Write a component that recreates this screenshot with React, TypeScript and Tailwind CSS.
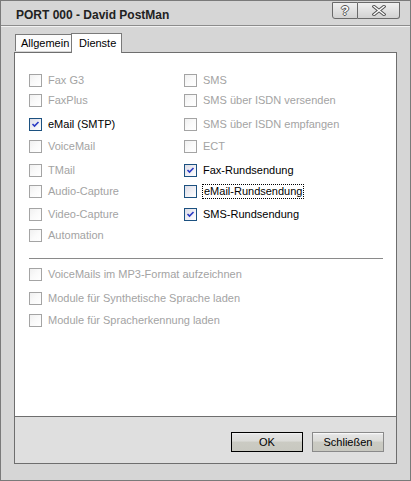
import React from 'react';

interface CheckItem {
  label: string;
  checked?: boolean;
  enabled?: boolean;
  focused?: boolean;
}

const leftItems: CheckItem[] = [
  { label: 'Fax G3' },
  { label: 'FaxPlus' },
  { label: 'eMail (SMTP)', checked: true, enabled: true },
  { label: 'VoiceMail' },
  { label: 'TMail' },
  { label: 'Audio-Capture' },
  { label: 'Video-Capture' },
  { label: 'Automation' },
];

const rightItems: CheckItem[] = [
  { label: 'SMS' },
  { label: 'SMS über ISDN versenden' },
  { label: 'SMS über ISDN empfangen' },
  { label: 'ECT' },
  { label: 'Fax-Rundsendung', checked: true, enabled: true },
  { label: 'eMail-Rundsendung', enabled: true, focused: true },
  { label: 'SMS-Rundsendung', checked: true, enabled: true },
];

const bottomItems: CheckItem[] = [
  { label: 'VoiceMails im MP3-Format aufzeichnen' },
  { label: 'Module für Synthetische Sprache laden' },
  { label: 'Module für Spracherkennung laden' },
];

const Box: React.FC<{ checked?: boolean; enabled?: boolean }> = ({ checked, enabled }) => (
  <span
    className={`relative w-[13px] h-[13px] shrink-0 border ${
      enabled
        ? 'border-[#1c5180] bg-[linear-gradient(135deg,#dcdce7_0%,#f2f2f6_60%,#ffffff_100%)]'
        : 'border-[#a4a4a4] bg-[linear-gradient(135deg,#f0f0f0_0%,#fafafa_50%,#ffffff_100%)]'
    }`}
  >
    {checked && (
      <svg className="absolute left-0 top-0" width="11" height="11" viewBox="0 0 11 11">
        <path d="M2.5 5 L4.5 7 L8.5 3" fill="none" stroke="#2a3ac4" strokeWidth="1.6" />
      </svg>
    )}
  </span>
);

const Check: React.FC<{ item: CheckItem }> = ({ item }) => (
  <div className="flex items-start h-[13px]">
    <Box checked={item.checked} enabled={item.enabled} />
    <span
      className={`ml-[6px] leading-[13px] whitespace-nowrap ${
        item.enabled ? 'text-black' : 'text-[#a3a3a3]'
      } ${item.focused ? 'outline outline-1 outline-dotted outline-black px-[1px] ml-[5px]' : ''}`}
    >
      {item.label}
    </span>
  </div>
);

const rowClass = [
  'h-[20px]',
  'h-[24px]',
  'h-[22px]',
  'h-[24px]',
  'h-[21px]',
  'h-[23px]',
  'h-[21px]',
  'h-[13px]',
];

export default function App() {
  return (
    <div className="w-[411px] h-[481px] bg-[#d6d6d6] border border-[#7a7a7a] flex flex-col font-['Liberation_Sans',Arial,sans-serif] text-[11px] select-none overflow-hidden">
      {/* Title bar */}
      <div className="h-[25px] shrink-0 flex items-start justify-between border-b border-[#8c8c8c] pl-[15px] pr-[10px]">
        <span className="mt-[6px] text-[12px] font-bold text-[#222] leading-[16px]">PORT 000 - David PostMan</span>
        <div className="flex mt-[1px] h-[17px]">
          <div className="w-[26px] h-full border border-[#6a6a6a] rounded-bl-[3px] bg-[linear-gradient(#f0f0f0,#d2d2d2)] flex items-center justify-center">
            <span className="text-[13px] font-bold leading-none text-white [text-shadow:1px_0_#555,-1px_0_#555,0_1px_#555,0_-1px_#555]">?</span>
          </div>
          <div className="w-[42px] h-full border border-l-0 border-[#6a6a6a] rounded-br-[3px] bg-[linear-gradient(#f0f0f0,#d2d2d2)] flex items-center justify-center">
            <svg width="14" height="11" viewBox="0 0 14 11">
              <path d="M2 1.5 L12 9.5 M12 1.5 L2 9.5" stroke="#555" strokeWidth="3.4" strokeLinecap="square" />
              <path d="M2 1.5 L12 9.5 M12 1.5 L2 9.5" stroke="#fff" strokeWidth="1.4" strokeLinecap="square" />
            </svg>
          </div>
        </div>
      </div>
      <div className="h-px bg-[#f2f2f2] shrink-0" />

      {/* Body */}
      <div className="flex-1 flex flex-col pl-[13px] pr-[13px] pb-[16px]">
        {/* Tabs */}
        <div className="flex items-end h-[25px] pl-[1px] shrink-0">
          <div className="h-[17px] w-[56px] border-l border-t border-[#7a7a7a] bg-[#fbfbfb] flex items-center pl-[5px] mb-px text-black">
            Allgemein
          </div>
          <div className="h-[20px] w-[51px] border border-b-0 border-[#7a7a7a] bg-white flex items-center pl-[7px] -mb-px relative z-10 text-black">
            Dienste
          </div>
        </div>

        {/* Panel */}
        <div className="flex-1 border border-[#6e6e6e] flex flex-col">
          <div className="h-[364px] bg-white border-b border-[#6e6e6e] flex flex-col pl-[14px] pr-[13px]">
            <div className="grid grid-cols-[155px_1fr] pt-[21px]">
              <div className="flex flex-col">
                {leftItems.map((it, i) => (
                  <div key={it.label} className={rowClass[i]}>
                    <Check item={it} />
                  </div>
                ))}
              </div>
              <div className="flex flex-col">
                {rightItems.map((it, i) => (
                  <div key={it.label} className={rowClass[i]}>
                    <Check item={it} />
                  </div>
                ))}
              </div>
            </div>
            <div className="mt-[16px] h-px bg-[#8a8a8a]" />
            <div className="flex flex-col pt-[9px]">
              <div className="h-[24px]">
                <Check item={bottomItems[0]} />
              </div>
              <div className="h-[22px]">
                <Check item={bottomItems[1]} />
              </div>
              <div className="h-[13px]">
                <Check item={bottomItems[2]} />
              </div>
            </div>
          </div>

          <div className="flex-1 bg-[#dfdfdf] flex justify-end items-start pt-[15px] pr-[12px] gap-[9px]">
            <button className="w-[72px] h-[20px] border border-black bg-[linear-gradient(#f4f4f4_0%,#e2e2e2_10%,#dcdcd8_45%,#cbcbc3_50%,#c8c8c0_100%)] text-black text-[11px] leading-none">
              OK
            </button>
            <button className="w-[72px] h-[20px] border border-[#8a8a8a] bg-[linear-gradient(#ffffff_0%,#e4e4e4_10%,#dcdcd8_45%,#cbcbc3_50%,#c8c8c0_100%)] text-black text-[11px] leading-none">
              Schließen
            </button>
          </div>
        </div>
      </div>
    </div>
  );
}
